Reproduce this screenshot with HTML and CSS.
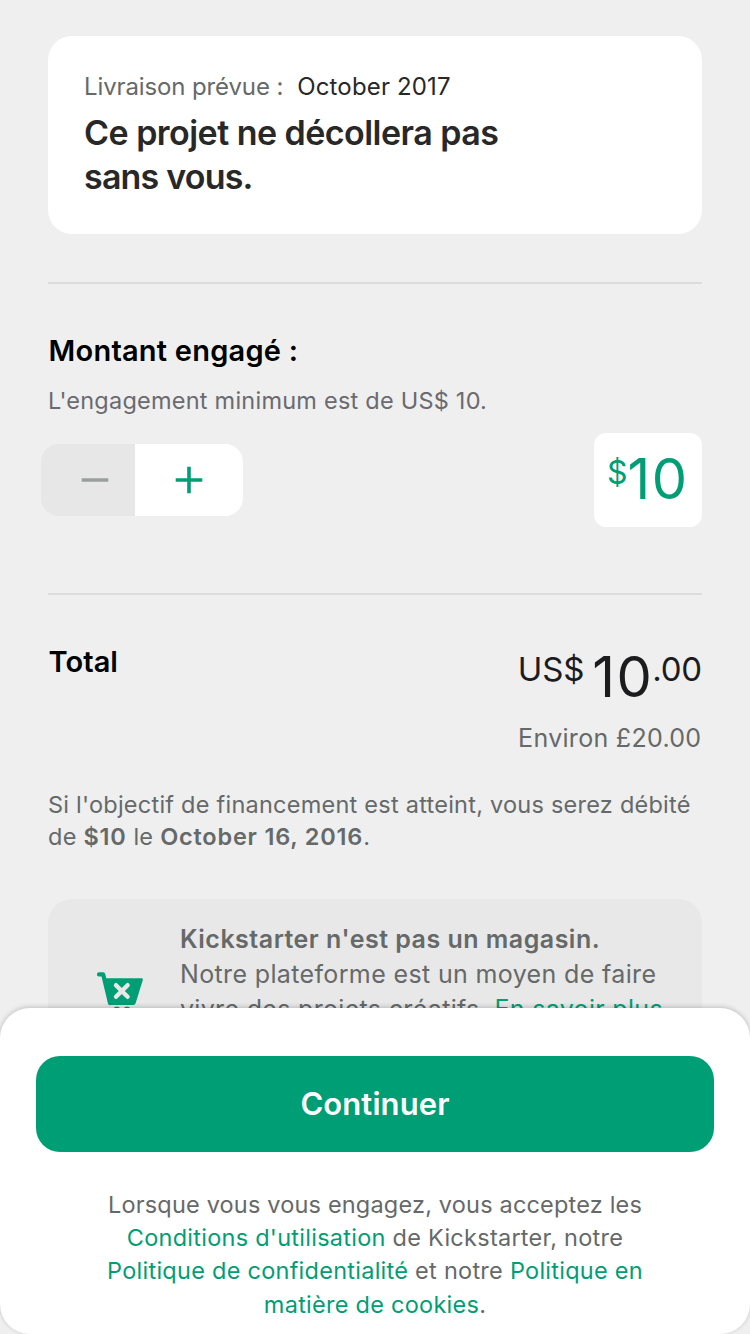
FILE: index.html
```html
<!DOCTYPE html>
<html lang="fr">
<head>
<meta charset="utf-8">
<title>Engagement</title>
<link rel="stylesheet" href="styles.css">
</head>
<body>
<div class="screen">
  <main class="content">
    <section class="reward">
      <p class="delivery"><span class="delivery-label">Livraison prévue :</span><span class="delivery-date">October 2017</span></p>
      <h1 class="reward-title">Ce projet ne décollera pas<br><span class="title-end">sans vous.</span></h1>
    </section>
    <section class="pledge">
      <h2 class="heading">Montant engagé :</h2>
      <p class="minimum">L'engagement minimum est de US$ 10.</p>
      <div class="pledge-row">
        <div class="stepper">
          <button class="step step-minus" aria-label="Moins"><svg width="28" height="28" viewBox="0 0 28 28"><path d="M.7 14h26.6" stroke="#9a9d9e" stroke-width="3.6"/></svg></button>
          <button class="step step-plus" aria-label="Plus"><svg width="28" height="28" viewBox="0 0 28 28"><path d="M.7 14h26.6M14 .7v26.6" stroke="#009e74" stroke-width="3.6"/></svg></button>
        </div>
        <div class="amount"><span class="amount-currency">$</span><span class="amount-value">10</span></div>
      </div>
    </section>
    <section class="total">
      <div class="total-row">
        <h2 class="heading total-heading">Total</h2>
        <div class="total-sum"><span class="sum-currency">US$</span><span class="sum-value">10</span><span class="sum-cents">.00</span></div>
      </div>
      <p class="conversion">Environ £20.00</p>
      <p class="charge">Si l'objectif de financement est atteint, vous serez débité<br>de <b>$10</b> le <b>October 16, 2016</b>.</p>
    </section>
    <section class="notice">
      <svg class="cart" width="48" height="52" viewBox="0 0 48 52">
        <path d="M3 2.4h4.2L14 31" fill="none" stroke="#009e74" stroke-width="4.2" stroke-linecap="round" stroke-linejoin="round"/>
        <path d="M8 6.3H45.500q1.800 0 1.300 1.800L39.700 31q-.6 1.900-2.400 1.900H14.500q-1.800 0-2.300-1.900z" fill="#009e74"/>
        <path d="M20 13.200l11.600 11.600M31.600 13.200L20 24.800" stroke="#e8e8e8" stroke-width="4.400" stroke-linecap="round"/>
        <circle cx="20.800" cy="38" r="3.500" fill="#009e74"/><circle cx="31" cy="38" r="3.500" fill="#009e74"/>
      </svg>
      <p class="notice-text"><b class="notice-title">Kickstarter n'est pas un magasin.</b><br>Notre plateforme est un moyen de faire<br><span class="notice-end">vivre des projets créatifs. <a class="link">En savoir plus</a></span></p>
    </section>
  </main>
  <footer class="sheet">
    <button class="continue">Continuer</button>
    <p class="terms"><span class="terms-intro">Lorsque vous vous engagez, vous acceptez les</span><br><a class="link">Conditions d'utilisation</a> de Kickstarter, notre<br><a class="link">Politique de confidentialité</a> et notre <a class="link">Politique en</a><br><a class="link">matière de cookies</a>.</p>
  </footer>
</div>
</body>
</html>
```
FILE: styles.css
```css
* { box-sizing: border-box; }
body { margin: 0; font-family: Inter, "Liberation Sans", sans-serif; color: #656969; }
h1, h2, p { margin: 0; white-space: nowrap; }
b { font-weight: 600; }
button { border: 0; padding: 0; font-family: inherit; }
.screen { width: 750px; height: 1334px; overflow: hidden; background: #efefef; display: flex; flex-direction: column; }
.content { height: 1008px; flex: none; padding: 36px 48px 0; overflow: hidden; }
.reward { height: 198px; background: #fff; border-radius: 24px; padding: 36px; }
.delivery { font-size: 24px; line-height: 30px; display: flex; gap: 14px; }
.delivery-label { letter-spacing: -.12px; }
.delivery-date { color: #282828; letter-spacing: .15px; }
.reward-title { font-size: 34px; line-height: 44px; font-weight: 600; color: #282828; margin-top: 9px; letter-spacing: -.53px; }
.title-end { letter-spacing: -.8px; }
.pledge { margin-top: 48px; height: 311px; border-top: 2px solid #dcdcdc; padding-top: 48px; }
.heading { font-size: 29px; line-height: 38px; font-weight: 600; color: #000; padding-left: .6px; letter-spacing: .22px; }
.total-heading { letter-spacing: .05px; }
.minimum { font-size: 23.500px; line-height: 32px; margin-top: 15px; color: #6a6a70; letter-spacing: .23px; }
.pledge-row { display: flex; justify-content: space-between; align-items: center; margin: 16px 0 0 -7px; }
.stepper { display: flex; width: 202px; height: 72px; border-radius: 18px; overflow: hidden; }
.step { display: flex; align-items: center; }
.step-minus { width: 94px; background: #e7e7e7; padding-left: 40px; }
.step-plus { width: 108px; background: #fff; padding-left: 40px; }
.amount { width: 108px; height: 94px; border-radius: 12px; background: #fff; color: #009e74; display: flex; padding: 11px 0 0 13px; }
.amount-currency { font-size: 32px; line-height: 58px; }
.amount-value { font-size: 56px; line-height: 70px; letter-spacing: 1.5px; }
.total { border-top: 2px solid #dcdcdc; padding-top: 48px; height: 306px; }
.total-row { display: flex; justify-content: space-between; height: 72px; }
.total-sum { display: flex; color: #1c1c1e; }
.sum-currency, .sum-cents { font-size: 33px; line-height: 53px; }
.sum-currency { margin-right: 8px; letter-spacing: -.2px; }
.sum-value { font-size: 56px; line-height: 68px; letter-spacing: 1.5px; }
.sum-cents { margin-left: -1px; letter-spacing: -.2px; }
.conversion { font-size: 25px; line-height: 32px; text-align: right; margin-top: 7px; padding-right: .6px; letter-spacing: .3px; }
.charge { font-size: 23.500px; line-height: 32px; margin-top: 35px; letter-spacing: .24px; }
.charge b { letter-spacing: .8px; }
.notice { height: 200px; border-radius: 24px; background: #e8e8e8; display: flex; padding: 23px 0 0 48px; }
.cart { margin: 50px 36px 0 0; flex: none; }
.notice-text { font-size: 25px; line-height: 35px; letter-spacing: .36px; }
.notice-title { letter-spacing: .49px; }
.notice-end { letter-spacing: .32px; }
.link { color: #009e74; }
.sheet { position: relative; flex: none; height: 326px; background: #fff; border-radius: 30px; box-shadow: 0 -1px 5px rgba(0,0,0,.2); padding: 48px 36px 0; }
.continue { display: block; width: 100%; height: 96px; border-radius: 24px; background: #009e74; color: #fff; font-size: 31px; font-weight: 600; letter-spacing: .1px; padding-bottom: 2px; }
.terms { font-size: 23.500px; line-height: 33.200px; margin-top: 36px; text-align: center; letter-spacing: .26px; }
.terms-intro { letter-spacing: .18px; }
```
